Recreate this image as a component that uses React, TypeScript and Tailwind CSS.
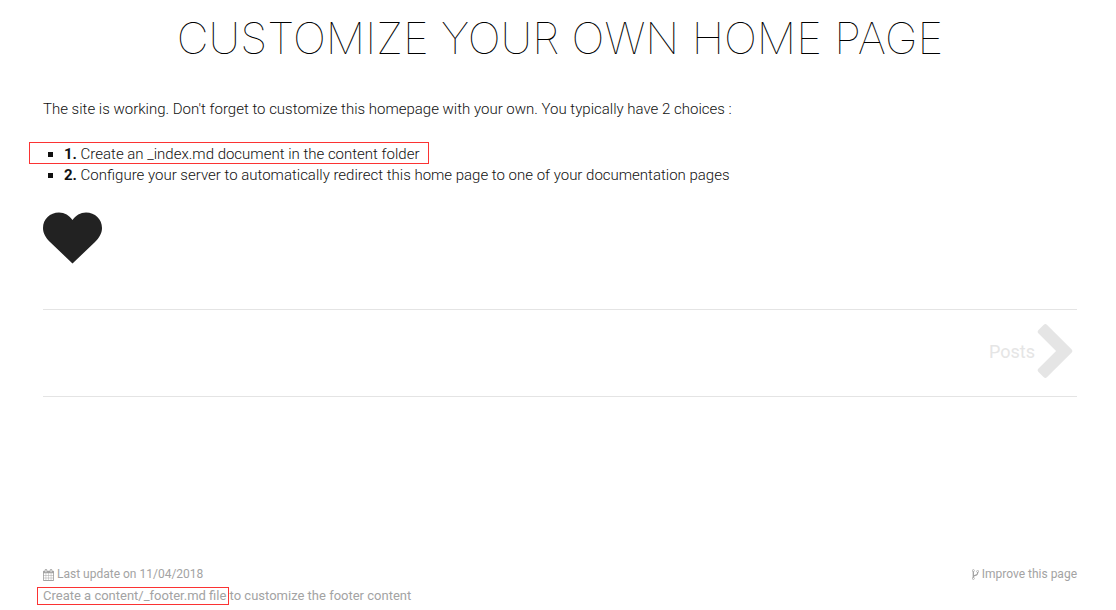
import type { ReactNode } from "react";

const PATHS = {
  chevron:
    "M1363 877l-742 742q-19 19-45 19t-45-19l-166-166q-19-19-19-45t19-45l531-531-531-531q-19-19-19-45t19-45l166-166q19-19 45-19t45 19l742 742q19 19 19 45t-19 45z",
  calendar:
    "M192 1664h288v-288h-288v288zm352 0h320v-288h-320v288zm-352-352h288v-320h-288v320zm352 0h320v-320h-320v320zm-352-384h288v-288h-288v288zm736 736h320v-288h-320v288zm-384-736h320v-288h-320v288zm768 736h288v-288h-288v288zm-384-352h320v-320h-320v320zm-352-864v-288q0-13-9.5-22.5t-22.5-9.5h-64q-13 0-22.5 9.5t-9.5 22.5v288q0 13 9.5 22.5t22.5 9.5h64q13 0 22.5-9.5t9.5-22.5zm736 864h288v-320h-288v320zm-384-384h320v-288h-320v288zm384 0h288v-288h-288v288zm32-480v-288q0-13-9.5-22.5t-22.5-9.5h-64q-13 0-22.5 9.5t-9.5 22.5v288q0 13 9.5 22.5t22.5 9.5h64q13 0 22.5-9.5t9.5-22.5zm384-64v1280q0 52-38 90t-90 38h-1408q-52 0-90-38t-38-90v-1280q0-52 38-90t90-38h128v-96q0-66 47-113t113-47h64q66 0 113 47t47 113v96h384v-96q0-66 47-113t113-47h64q66 0 113 47t47 113v96h128q52 0 90 38t38 90z",
  fork: "M672 1472q0-40-28-68t-68-28-68 28-28 68 28 68 68 28 68-28 28-68zm0-1152q0-40-28-68t-68-28-68 28-28 68 28 68 68 28 68-28 28-68zm640 128q0-40-28-68t-68-28-68 28-28 68 28 68 68 28 68-28 28-68zm96 0q0 52-26 96.5t-70 69.5q-2 287-226 414-67 38-203 81-128 40-169.5 71t-41.5 100v26q44 25 70 69.5t26 96.5q0 80-56 136t-136 56-136-56-56-136q0-52 26-96.5t70-69.5v-820q-44-25-70-69.5t-26-96.5q0-80 56-136t136-56 136 56 56 136q0 52-26 96.5t-70 69.5v497q54-26 154-57 55-17 87.5-29.5t70.5-31 59-39.5 40.5-51 28-69.5 8.5-91.5q-44-25-70-69.5t-26-96.5q0-80 56-136t136-56 136 56 56 136z",
};

function Icon({ d, viewBox, className }: { d: string; viewBox: string; className: string }) {
  return (
    <svg viewBox={viewBox} className={className} fill="currentColor" aria-hidden="true">
      <path d={d} />
    </svg>
  );
}

function Highlight({ className, children }: { className: string; children: ReactNode }) {
  return (
    <span className="relative">
      {children}
      <span className={`pointer-events-none absolute border border-[#fb3333] ${className}`} />
    </span>
  );
}

export default function App() {
  return (
    <div className="flex min-h-screen flex-col bg-white pr-[39px] pl-[43px] font-['Roboto',sans-serif] text-[15px] leading-[21px] text-[#222]">
      <main>
        <h1 className="pt-2 text-center font-['Inter',sans-serif] text-[44px] leading-[60px] font-thin text-black uppercase">
          Customize your own home page
        </h1>
        <div className="font-[350] text-[#111]">
          <p className="mt-[31px]">
            The site is working. Don't forget to customize this homepage with your own. You typically have 2 choices :
          </p>
          <ul className="mt-6 list-[square] pl-[21px]">
            <li>
              <Highlight className="-top-[3px] -right-[10px] -bottom-px -left-[35px]">
                <b className="font-bold">1.</b> Create an _index.md document in the content folder
              </Highlight>
            </li>
            <li>
              <b className="font-bold">2.</b> Configure your server to automatically redirect this home page to one of your
              documentation pages
            </li>
          </ul>
        </div>
        <svg viewBox="0 0 60 52" className="mt-[26px] h-[52px] w-[60px]" fill="currentColor" role="img" aria-label="Heart">
          <path d="M29.500 51.500L7 30C3 26 0 21.500 0 16C0 7 7 .5 16 .5C21.500 .5 26.500 3.500 29.500 8C32.500 3.500 37.500 .5 43 .5C52 .5 59 7 59 16C59 21.500 56 26 52 30Z" />
        </svg>
      </main>
      <nav className="mt-[45px] flex h-[88px] items-center justify-end border-y border-[#e4e4e4]">
        <a href="#posts" className="flex items-center pr-1 pb-1 text-[18px] text-[#e5e5e5]">
          Posts
          <Icon d={PATHS.chevron} viewBox="346 26 1036 1612" className="ml-[2px] h-[54px] w-9" />
        </a>
      </nav>
      <footer className="mt-auto pb-1 text-[#a3a3a3]">
        <div className="flex justify-between text-[12px]">
          <span className="flex items-center gap-[3px]">
            <Icon d={PATHS.calendar} viewBox="64 0 1664 1792" className="h-3 w-[11px]" />
            Last update on 11/04/2018
          </span>
          <a href="#edit" className="flex items-center gap-[3px]">
            <Icon d={PATHS.fork} viewBox="384 128 1024 1536" className="h-[11px] w-[7px]" />
            Improve this page
          </a>
        </div>
        <p className="text-[13px]">
          <Highlight className="-top-px -right-[3px] -bottom-[2px] -left-[6px]">Create a content/_footer.md file</Highlight> to
          customize the footer content
        </p>
      </footer>
    </div>
  );
}
